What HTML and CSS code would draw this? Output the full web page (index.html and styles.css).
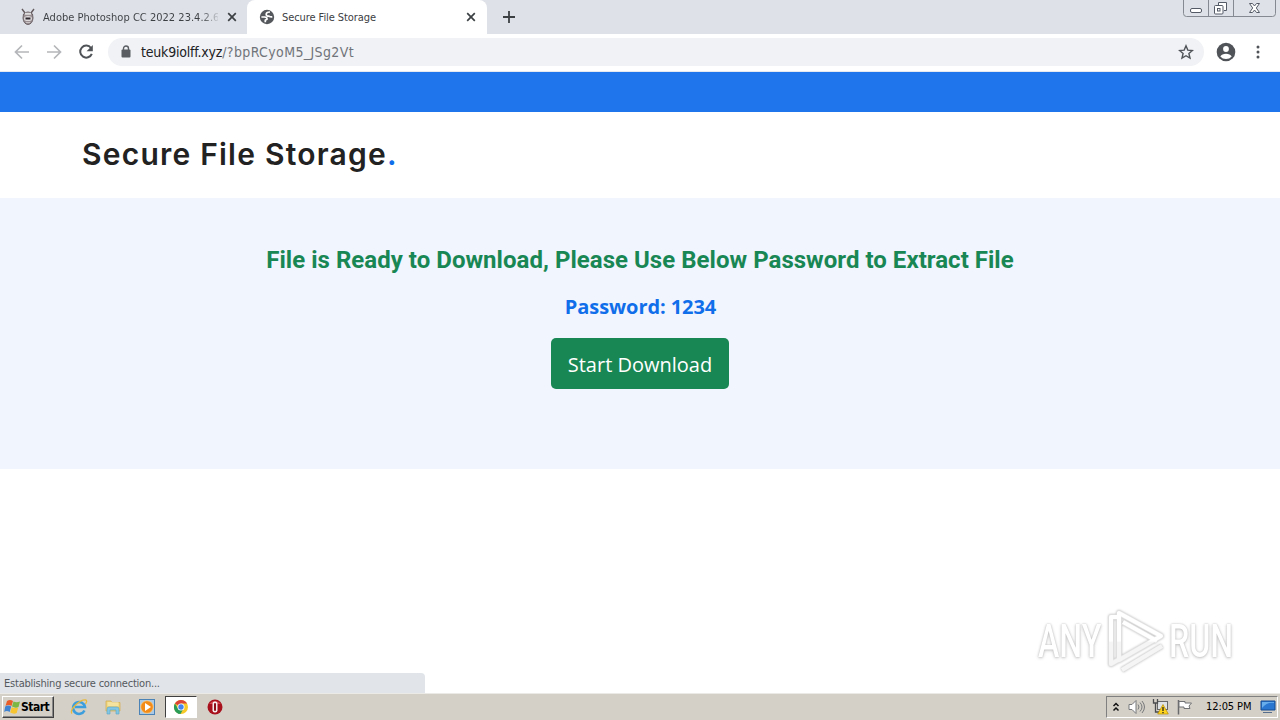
FILE: index.html
```html
<!DOCTYPE html>
<html lang="en">
<head>
    <meta charset="UTF-8">
    <meta name="viewport" content="width=device-width, initial-scale=1.0">
    <title>Secure File Storage</title>
    <link rel="stylesheet" href="styles.css">
</head>
<body>
    <div class="tab-strip">
        <div class="tab">
            <svg class="favicon" width="16" height="18" viewBox="0 0 16 18">
                <path d="M2 1l3 4M14 1l-3 4" stroke="#62595c" stroke-width="1.4"/>
                <path d="M3.500 6Q8 2 12.500 6L13 10Q12.500 16 8 16.500Q3.500 16 3 10Z" fill="#9a9094" stroke="#6a6165"/>
                <path d="M5 5.800h6" stroke="#ddd" stroke-width="2"/>
                <ellipse cx="8" cy="10.500" rx="4" ry="2.600" fill="#dedadc"/>
                <path d="M5.500 10.500h5" stroke="#302a30" stroke-width="2"/>
                <path d="M6 14.500h4" stroke="#c9c3c5"/>
            </svg>
            <span class="tab-title faded">Adobe Photoshop CC 2022 23.4.2.6</span>
            <svg class="close" width="10" height="10" viewBox="0 0 10 10"><path d="M1.200 1.200l7.600 7.600M8.800 1.200l-7.600 7.600" stroke="#3c4043" stroke-width="1.700"/></svg>
        </div>
        <div class="tab active">
            <svg class="favicon" width="16" height="16" viewBox="0 0 16 16" fill="none">
                <circle cx="8" cy="8" r="7.200" fill="#54575b"/>
                <path d="M11 3Q7.200 3 7.200 5.200T10 7.200Q11.500 8 13.300 7.800" stroke="#fff" stroke-width="1.700"/>
                <path d="M2.400 8H5.500Q8.300 8.300 8 10.300L6.300 11.300V13.300" stroke="#fff" stroke-width="1.700"/>
            </svg>
            <span class="tab-title">Secure File Storage</span>
            <svg class="close" width="10" height="10" viewBox="0 0 10 10"><path d="M1.200 1.200l7.600 7.600M8.800 1.200l-7.600 7.600" stroke="#3c4043" stroke-width="1.700"/></svg>
        </div>
        <svg class="new-tab" width="12" height="12" viewBox="0 0 12 12"><path d="M6 0v12M0 6h12" stroke="#3c4043" stroke-width="1.800"/></svg>
        <svg class="window-buttons" width="93" height="17" viewBox="0 0 93 17" fill="none">
            <path d="M.5 0v13.500q0 3 3 3h86q3 0 3-3V0M25.500 0v16M50.500 0v16" stroke="#858991"/>
            <rect x="7.500" y="8.500" width="11" height="4" rx="1.500" fill="#fff" stroke="#555b66"/>
            <path d="M35.500 5V2.500h8v8H41" fill="#fff" stroke="#555b66"/>
            <rect x="31.500" y="5.500" width="8.500" height="8.500" rx="1" fill="#fff" stroke="#555b66"/>
            <rect x="34.500" y="8.500" width="2.500" height="2.500" stroke="#555b66"/>
            <path d="M66.500 3.500h3l2 2.500 2-2.500h3l-3.200 4.500 3.200 4.500h-3l-2-2.500-2 2.500h-3l3.200-4.500Z" fill="#fff" stroke="#555b66"/>
        </svg>
    </div>

    <div class="toolbar">
        <svg class="nav" width="16" height="16" viewBox="0 0 16 16" fill="none" stroke="#b4b6b9" stroke-width="1.700"><path d="M15 8H2M8 1.500L1.500 8 8 14.500"/></svg>
        <svg class="nav" width="16" height="16" viewBox="0 0 16 16" fill="none" stroke="#b4b6b9" stroke-width="1.700"><path d="M1 8h13M8 1.500L14.500 8 8 14.500"/></svg>
        <svg class="nav" width="16" height="16" viewBox="0 0 16 16"><path d="M13 4A6 6 0 1 0 13.800 9.800" fill="none" stroke="#505458" stroke-width="2"/><path d="M14.800 1v6.200H8.600Z" fill="#505458"/></svg>
        <div class="address">
            <svg class="lock" width="10" height="13" viewBox="0 0 10 13"><rect x=".5" y="4.500" width="9" height="8" rx="1" fill="#5a5e63"/><path d="M2.500 5V3.500a2.500 2.500 0 0 1 5 0V5" fill="none" stroke="#5a5e63" stroke-width="1.400"/></svg>
            <span class="url"><b>teuk9iolff.xyz</b>/?bpRCyoM5_JSg2Vt</span>
            <svg class="star" width="16" height="16" viewBox="0 0 16 16"><path d="M8 1.800l1.800 4.300 4.600.4-3.500 3 1.100 4.600L8 11.700l-4 2.400 1.100-4.600-3.500-3 4.600-.4Z" fill="none" stroke="#505458" stroke-width="1.400"/></svg>
        </div>
        <svg class="profile" width="20" height="20" viewBox="0 0 20 20"><circle cx="10" cy="10" r="9.300" fill="#505458"/><circle cx="10" cy="7" r="2.900" fill="#fff"/><path d="M4.300 14.500Q6 11.800 10 11.800t5.700 2.700Q13.500 17 10 17t-5.700-2.500Z" fill="#fff"/></svg>
        <svg class="menu" width="4" height="14" viewBox="0 0 4 14" fill="#505458"><circle cx="2" cy="2" r="1.500"/><circle cx="2" cy="7" r="1.500"/><circle cx="2" cy="12" r="1.500"/></svg>
    </div>

    <main class="page">
        <div class="topbar"></div>
        <header class="header">
            <h1 class="logo">Secure File Storage<span>.</span></h1>
        </header>
        <section class="hero">
            <h2 class="ready">File is Ready to Download, Please Use Below Password to Extract File</h2>
            <p class="password">Password: 1234</p>
            <a class="btn">Start Download</a>
        </section>
        <div class="watermark">
            <span class="any">ANY</span>
            <svg width="60" height="64" viewBox="0 0 60 64" fill="none" stroke-linejoin="round">
                <g stroke="#e2e2e2" stroke-width="5.500"><path d="M13 4v47L55 27ZM13 8H5v47l7-4M16 61l40-24M17 13l34 19"/></g>
                <path d="M13 4v47L55 27ZM13 8H5v47l7-4M16 61l40-24M17 13l34 19" stroke="url(#shade)" stroke-width="4"/>
                <defs>
                    <linearGradient id="shade" x1="0" y1="0" x2="0" y2="64" gradientUnits="userSpaceOnUse">
                        <stop offset=".5" stop-color="#fff"/>
                        <stop offset=".52" stop-color="#f5f5f5"/>
                    </linearGradient>
                </defs>
            </svg>
            <span class="run">RUN</span>
        </div>
        <div class="status">Establishing secure connection...</div>
    </main>

    <footer class="taskbar">
        <div class="start">
            <svg width="17" height="16" viewBox="0 0 17 16">
                <path d="M3 2q3-2 6 0L7.500 7q-3-2-6 0Z" fill="#e95d28"/>
                <path d="M9.500 2.500q3 1.500 6.500 0L14.500 8q-3 1.500-6.500-.5Z" fill="#7bb742"/>
                <path d="M1.200 7.500q3-2 6 0L5.700 13q-3-2-5.500 0Z" fill="#3f83d1"/>
                <path d="M7.700 8.300q3 1.500 6.500.2l-1.500 5.500q-3 1.500-6.500-.5Z" fill="#f8c532"/>
            </svg>
            <span>Start</span>
        </div>
        <div class="launch">
            <svg width="18" height="18" viewBox="0 0 18 18" fill="none">
                <path d="M14.500 12.500A6 6 0 1 1 15 9H5" stroke="#3c9edc" stroke-width="2.500"/>
                <path d="M2 15.500C-1 12 10 1 16 2q1.500 1-.5 4" stroke="#e9b93b" stroke-width="1.300"/>
            </svg>
        </div>
        <div class="launch">
            <svg width="18" height="18" viewBox="0 0 18 18">
                <path d="M2 3h5l1 1.500h8V13H2Z" fill="#ecd27a" stroke="#d2ad4f" stroke-width=".7"/>
                <path d="M3.500 5h11M3.500 7h11" stroke="#fff4c0"/>
                <path d="M3 16v-5q0-2 2-2h8q2 0 2 2v5h-3v-4H6v4Z" fill="#82c6e4" stroke="#58a4c7" stroke-width=".6"/>
            </svg>
        </div>
        <div class="launch">
            <svg width="18" height="18" viewBox="0 0 18 18">
                <rect x="1.500" y="1.500" width="15" height="15" fill="#a9c9e7" stroke="#4c83b6"/>
                <circle cx="9" cy="9" r="6.300" fill="#f28b18" stroke="#fbd38e" stroke-width=".7"/>
                <path d="M7 5l6 4-6 4Z" fill="#fff"/>
            </svg>
        </div>
        <div class="launch pressed">
            <svg width="16" height="16" viewBox="0 0 16 16">
                <circle cx="8" cy="8" r="7" fill="#f7c928"/>
                <path d="M8 8L1.900 4.500A7 7 0 0 1 14.100 4.600H8Z" fill="#dc4437"/>
                <path d="M8 8l-1.500 6.900A7 7 0 0 1 1.900 4.500L5 9.600Z" fill="#2b9b58"/>
                <path d="M5 9.600L8 11l2-.5L7.500 15A7 7 0 0 1 2 11Z" fill="#2b9b58"/>
                <circle cx="8" cy="8" r="3.500" fill="#fff"/><circle cx="8" cy="8" r="2.700" fill="#4384ee"/>
            </svg>
        </div>
        <div class="launch">
            <svg width="16" height="16" viewBox="0 0 16 16"><circle cx="8" cy="8" r="7.500" fill="#a8101b"/><path d="M2 5q6-6 12 0Z" fill="#d5484f"/><rect x="5.500" y="2.500" width="5" height="11" rx="2.200" fill="#f5eeee"/><rect x="7" y="4" width="2" height="8" rx="1" fill="#8e0e18"/></svg>
        </div>
        <div class="tray">
            <svg width="8" height="10" viewBox="0 0 8 10" fill="none" stroke="#111" stroke-width="1.500"><path d="M1.500 4L4 1.500 6.500 4M1.500 8.500L4 6l2.500 2.500"/></svg>
            <svg width="17" height="16" viewBox="0 0 17 16" stroke="#77797b" fill="none"><path d="M1 5.500h3l4-4v13l-4-4H1Z" fill="#fff"/><path d="M10 5.500q2 2.500 0 5M12 3.500q4 4.500 0 9M14 2q5 6 0 12"/></svg>
            <svg width="17" height="17" viewBox="0 0 17 17"><rect x="5.500" y="3.500" width="10" height="8" fill="#dfe3e6" stroke="#656769"/><path d="M1.500 1v4h4V1M3.500 5v9h5" fill="none" stroke="#4a4c4e" stroke-width="1.300"/><path d="M11 6.500l5.300 9.500H5.700Z" fill="#ffd41c" stroke="#b88c00" stroke-width=".7"/><path d="M11 9v4M11 14v1.300" stroke="#222" stroke-width="1.300"/></svg>
            <svg width="17" height="16" viewBox="0 0 17 16"><path d="M2.500 1v14.500" stroke="#686a6c" stroke-width="1.500"/><path d="M3 2.500h6v1.500h6.500L13 7l1 2.500H8V8H3Z" fill="#fff" stroke="#707274"/></svg>
            <span class="clock">12:05 PM</span>
            <svg class="desktop" width="16" height="14" viewBox="0 0 16 14"><path d="M1 1h14v9H1Z" fill="#2876d0" stroke="#174a91"/><path d="M2 8Q7 2 14 3V2H2Z" fill="#67aceb"/><path d="M3 12.500h9" stroke="#576f8c"/></svg>
        </div>
    </footer>
</body>
</html>
```
FILE: styles.css
```css
* {
    box-sizing: border-box;
}
body {
    margin: 0;
    width: 1280px;
    height: 720px;
    overflow: hidden;
    display: flex;
    flex-direction: column;
    background: #fff;
    font-family: 'DejaVu Sans Condensed', 'DejaVu Sans', sans-serif;
}
svg {
    display: block;
    flex: none;
}
.tab-strip {
    height: 34px;
    flex: none;
    display: flex;
    background: #dee1e8;
}
.tab {
    width: 247px;
    height: 34px;
    padding: 0 10px 0 20px;
    display: flex;
    align-items: center;
}
.tab.active {
    width: 240px;
    padding: 0 11px 0 12px;
    background: #fff;
    border-radius: 8px 8px 0 0;
}
.tab-title {
    width: 180px;
    margin-left: 7px;
    font-size: 11px;
    letter-spacing: -0.08px;
    white-space: nowrap;
    overflow: hidden;
    color: #3c4043;
}
.tab-title.faded {
    width: 175px;
    letter-spacing: 0.02px;
    background: linear-gradient(90deg, #3c4043 90%, #c8cbd0 100%);
    background-clip: text;
    -webkit-background-clip: text;
    color: transparent;
}
.close {
    margin-left: auto;
}
.new-tab {
    margin: 11px 0 0 16px;
}
.window-buttons {
    margin-left: auto;
    margin-right: 4px;
}
.toolbar {
    height: 38px;
    flex: none;
    display: flex;
    align-items: center;
    padding: 0 20px 2px 14px;
    border-bottom: 1px solid #e6eaf0;
}
.nav {
    margin-right: 16px;
}
.address {
    width: 1096px;
    height: 28px;
    margin-left: -2px;
    padding: 0 10px 0 13px;
    display: flex;
    align-items: center;
    border-radius: 14px;
    background: #f0f2f5;
}
.url {
    margin-left: 10px;
    font-size: 14px;
    letter-spacing: 0.38px;
    color: #70747a;
}
.url b {
    font-weight: normal;
    letter-spacing: -0.2px;
    color: #202124;
}
.star {
    margin-left: auto;
}
.profile {
    margin-left: 12px;
}
.menu {
    margin-left: auto;
}
.page {
    position: relative;
    flex: 1;
}
.topbar {
    height: 40px;
    background: #1f75eb;
}
.header {
    height: 86px;
    padding: 0 82px 2px;
    display: flex;
    align-items: center;
}
.logo {
    margin: 0;
    font: 600 30px/36px Inter, sans-serif;
    letter-spacing: 1.22px;
    color: #222;
}
.logo span {
    color: #106eea;
}
.hero {
    height: 271px;
    padding-top: 48px;
    display: flex;
    flex-direction: column;
    align-items: center;
    background: #f0f5fe;
}
.ready {
    margin: 0;
    font: 700 24px/29px Roboto, sans-serif;
    letter-spacing: 0.03px;
    color: #198754;
    white-space: nowrap;
}
.password {
    margin: 17px 0 0;
    padding-left: 1px;
    font: 700 20px/30px 'Open Sans', sans-serif;
    letter-spacing: -0.08px;
    color: #106eea;
}
.btn {
    width: 178px;
    height: 51px;
    margin-top: 16px;
    border-radius: 5px;
    background: #198754;
    color: #fff;
    font: 400 20px/53px 'Open Sans', sans-serif;
    text-align: center;
}
.watermark {
    position: absolute;
    left: 1038px;
    top: 537px;
    height: 64px;
    display: flex;
    align-items: center;
    color: #fff;
    font: 500 46px/64px Roboto, sans-serif;
    text-shadow: 0 0 2px #bbb, 0 1px 4px #c4c4c4;
}
.watermark svg {
    margin: 0 3px 0 5px;
    filter: drop-shadow(0 0 1px #bbb);
}
.watermark span {
    width: 63px;
    transform: scaleX(0.7);
    transform-origin: left;
}
.status {
    position: absolute;
    left: 0;
    bottom: 0;
    width: 425px;
    height: 20px;
    padding-left: 4px;
    border-top-right-radius: 4px;
    background: #e1e4e9;
    color: #55595e;
    font-size: 11px;
    line-height: 21px;
    letter-spacing: -0.22px;
}
.taskbar {
    height: 27px;
    flex: none;
    display: flex;
    align-items: center;
    padding: 0 2px 1px;
    border-top: 1px solid #eceae6;
    background: #d4d0c8;
}
.start {
    width: 52px;
    height: 22px;
    margin-right: 9px;
    padding-left: 1px;
    display: flex;
    align-items: center;
    border: 1px solid;
    border-color: #fff #404040 #404040 #fff;
    box-shadow: inset -1px -1px #888;
    color: #000;
    font-size: 12px;
    font-weight: bold;
    letter-spacing: -0.5px;
}
.launch {
    width: 32px;
    height: 22px;
    margin-right: 2px;
    display: flex;
    align-items: center;
    justify-content: center;
}
.launch.pressed {
    background: #fff;
    border: 1px solid;
    border-color: #404040 #fff #fff #404040;
}
.tray {
    width: 172px;
    height: 22px;
    margin-left: auto;
    padding: 0 1px 0 5px;
    display: flex;
    align-items: center;
    gap: 7px;
    border: 1px solid;
    border-color: #808080 #fff #fff #808080;
}
.tray svg:nth-child(2) {
    margin-left: 1px;
}
.clock {
    margin-left: 6px;
    color: #000;
    font-size: 11px;
    letter-spacing: -0.1px;
    white-space: nowrap;
}
.desktop {
    margin-left: auto;
}
```
